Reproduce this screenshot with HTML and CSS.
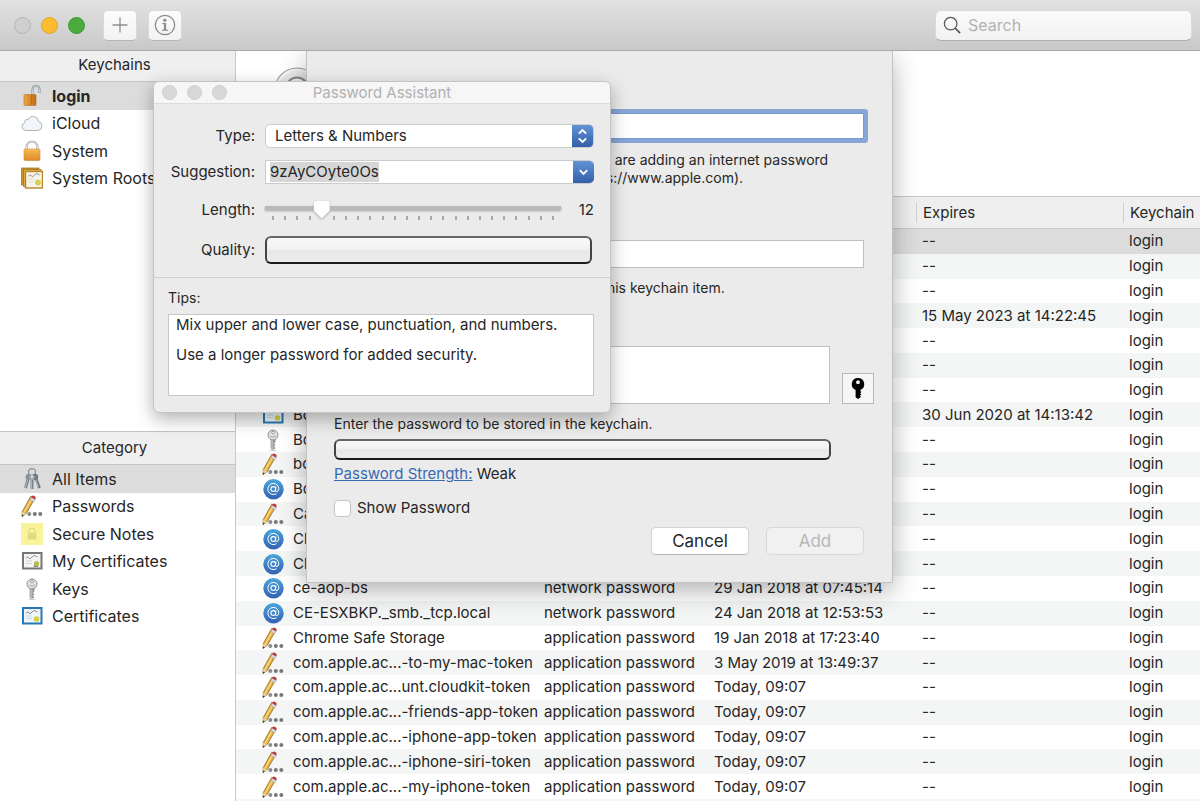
FILE: index.html
```html
<!DOCTYPE html>
<html lang="en">
<head>
    <meta charset="UTF-8">
    <meta name="viewport" content="width=device-width, initial-scale=1.0">
    <title>Keychain Access</title>
    <link rel="stylesheet" href="styles.css">
</head>
<body>
    <!-- Shared icons -->
    <svg class="sprite" aria-hidden="true">
        <defs>
            <linearGradient id="gold" x1="0" y1="0" x2="0" y2="1">
                <stop offset="0" stop-color="#fbc05c"/>
                <stop offset="1" stop-color="#e08a22"/>
            </linearGradient>
            <linearGradient id="copper" x1="0" y1="0" x2="1" y2="0">
                <stop offset="0" stop-color="#f0a640"/>
                <stop offset="1" stop-color="#c06a14"/>
            </linearGradient>
            <linearGradient id="blue" x1="0" y1="0" x2="0" y2="1">
                <stop offset="0" stop-color="#48a6d8"/>
                <stop offset="1" stop-color="#3561b4"/>
            </linearGradient>
            <linearGradient id="steel" x1="0" y1="0" x2="1" y2="0">
                <stop offset="0" stop-color="#d5d5d5"/>
                <stop offset="1" stop-color="#8a8a8a"/>
            </linearGradient>
        </defs>
        <symbol id="lock-open" viewBox="0 0 22 22">
            <path d="M11.500 10V5q0-4 3.500-4t3.500 3.500V8" fill="none" stroke="#7f9099" stroke-width="2"/>
            <path d="M11.500 9V5q0-4 3.500-4t3.500 3.500V7.500" fill="none" stroke="#dfe6ea" stroke-width=".8"/>
            <rect x="3" y="9.500" width="12" height="11" rx="1" fill="url(#copper)" stroke="#b5701f" stroke-width=".6"/>
            <path d="M10.500 10v10" stroke="#a9570c" stroke-width=".8" opacity=".6"/>
        </symbol>
        <symbol id="lock" viewBox="0 0 22 22">
            <path d="M5.500 11V7a5.500 5.500 0 0 1 11 0v4" fill="none" stroke="#9a9a9a" stroke-width="2"/>
            <path d="M5.500 10V7a5.500 5.500 0 0 1 11 0v3" fill="none" stroke="#f0f0f0" stroke-width=".9"/>
            <rect x="3" y="9" width="16" height="11.500" rx="1.200" fill="url(#gold)" stroke="#cf8a30" stroke-width=".6"/>
            <path d="M3.500 12h15M3.500 14.500h15M3.500 17h15" stroke="#d68d33" stroke-width=".6" opacity=".7"/>
        </symbol>
        <symbol id="cloud" viewBox="0 0 22 22">
            <path d="M5 18.500a4 4 0 0 1-1.500-7.700 3.300 3.300 0 0 1 4-3.500 5.300 5.300 0 0 1 10 2.200 4.600 4.600 0 0 1-.4 9z" fill="#f2f5f9" stroke="#a3abb4" stroke-width=".9"/>
        </symbol>
        <symbol id="roots" viewBox="0 0 22 22">
            <rect x=".5" y="1" width="17.500" height="17" fill="#c9922c" stroke="#9a7126" stroke-width=".7"/>
            <rect x="2.500" y="2.500" width="17.500" height="17" fill="#e2b34a" stroke="#9a7126" stroke-width=".7"/>
            <rect x="4.500" y="4.500" width="17" height="16.500" fill="#f7f5ea" stroke="#b98325" stroke-width="1.400"/>
            <path d="M7.500 9q2-2 3 0t3-1 5 0" fill="none" stroke="#777" stroke-width=".8"/>
            <path d="M7.500 12h6M7.500 15h5" stroke="#d5d2c4" stroke-width=".8"/>
            <circle cx="17" cy="15.500" r="3" fill="#d5cf53"/>
        </symbol>
        <symbol id="keyring" viewBox="0 0 22 22">
            <circle cx="11" cy="4" r="3.500" fill="none" stroke="#8c949b" stroke-width="1.300"/>
            <path d="M8 8 4.500 20M11 8v13M14 8l4.500 12" stroke="#6c747b" stroke-width="2.800"/>
            <path d="M7.700 9 4.200 20M10.700 9v12M13.700 9l3.700 10" stroke="#c4cacf" stroke-width=".9"/>
            <circle cx="7.500" cy="9" r="3" fill="#899198"/>
            <circle cx="14" cy="9" r="3.200" fill="#737b82"/>
            <circle cx="11" cy="9.500" r="2.500" fill="#a9b0b6"/>
            <circle cx="11" cy="8.500" r=".9" fill="#f1f1f1"/>
        </symbol>
        <symbol id="pencil" viewBox="0 0 22 22">
            <path d="M9.800 1.300 14 3.200 5.200 18.500 1 21.500l.3-5z" fill="#e9b03c" stroke="#7d5d24" stroke-width=".7"/>
            <path d="M10.700 3.800 3.200 17.200" stroke="#fbe08e" stroke-width="1.200"/>
            <path d="m8.900 4.800 3.900 2.200L14.200 4.400 10.300 2.100z" fill="#d4d6da" stroke="#8f8f8f" stroke-width=".4"/>
            <path d="M10.200 2.300q.8-2.400 3-1.400t1 3.500z" fill="#c5343b"/>
            <path d="m1.300 16.800 3.700 1.700L1 21.300z" fill="#ecd3a3"/>
            <path d="m.8 21.800.3-2.200 1.700.9z" fill="#333"/>
            <circle cx="8.300" cy="19" r="2" fill="#8b8b8b"/>
            <circle cx="13.800" cy="19" r="2" fill="#777"/>
            <circle cx="19.300" cy="19" r="2" fill="#777"/>
        </symbol>
        <symbol id="note" viewBox="0 0 22 22">
            <rect x="0" y="0" width="22" height="22" fill="#f9f39a"/>
            <path d="M8.200 10V8a2.800 2.800 0 0 1 5.600 0v2" fill="none" stroke="#e0d885" stroke-width="1.300"/>
            <rect x="6.700" y="10" width="8.600" height="6.500" fill="#e2d983"/>
        </symbol>
        <symbol id="cert-gray" viewBox="0 0 22 22">
            <rect x="2" y="3" width="18.500" height="15.500" fill="#f4f4f1" stroke="#767676" stroke-width="2"/>
            <path d="M5 8q2-2 3 0t3-1 5.500 0" fill="none" stroke="#777" stroke-width=".8"/>
            <path d="M5 11h6M5 13.500h6" stroke="#ccc" stroke-width=".8"/>
            <path d="m14 12-1.500 5h5z" fill="#82906c"/>
            <circle cx="15.500" cy="13.500" r="2.600" fill="#b7bb52"/>
        </symbol>
        <symbol id="cert" viewBox="0 0 22 22">
            <rect x="2" y="3" width="18.500" height="15.500" fill="#eef6fa" stroke="#2878b5" stroke-width="2"/>
            <path d="M5 8q2-2 3 0t3-1 5.500 0" fill="none" stroke="#667" stroke-width=".8"/>
            <path d="M5 11h6M5 13.500h6" stroke="#b6d5e4" stroke-width=".8"/>
            <circle cx="15.500" cy="14" r="2.800" fill="#d8cf4c"/>
        </symbol>
        <symbol id="key" viewBox="0 0 22 22">
            <path d="M9 10v9.500l1.500 1.300 2.500-1.600-1.300-1.500 1.300-1.500-1.300-1.400 1.300-1.500V10z" fill="url(#steel)" stroke="#777" stroke-width=".6"/>
            <circle cx="11" cy="6" r="5" fill="#e3e3e3" stroke="#888" stroke-width=".9"/>
            <circle cx="11" cy="3.600" r="1.300" fill="#fff" stroke="#777" stroke-width=".7"/>
            <path d="M8 7q3 2.500 6 0" fill="none" stroke="#999" stroke-width=".8"/>
            <ellipse cx="11" cy="21.300" rx="4" ry=".6" fill="#ccc"/>
        </symbol>
        <symbol id="at" viewBox="0 0 22 22">
            <circle cx="11.500" cy="11.300" r="10.200" fill="url(#blue)"/>
            <circle cx="11.300" cy="11" r="2.400" fill="none" stroke="#fff" stroke-width="1.100"/>
            <path d="M14 8.500 13.400 12q0 1.700 1.400 1.600 1.900-.3 2-2.900A5.500 5.500 0 0 0 11.200 5.400a5.600 5.600 0 1 0 3.300 10.300" fill="none" stroke="#fff" stroke-width="1"/>
        </symbol>
    </svg>

    <header class="toolbar">
        <span class="light light-off"></span>
        <span class="light light-yellow"></span>
        <span class="light light-green"></span>
        <button class="tool-btn tool-first" type="button" aria-label="Add">
            <svg viewBox="0 0 24 24"><path d="M12 4.500v15M4.500 12h15" stroke="#8d8d8d" stroke-width="1.300"/></svg>
        </button>
        <button class="tool-btn" type="button" aria-label="Info">
            <svg viewBox="0 0 24 24">
                <circle cx="12" cy="12" r="9.700" fill="none" stroke="#8d8d8d" stroke-width="1.300"/>
                <circle cx="11.800" cy="7.200" r="1.600" fill="#8d8d8d"/>
                <path d="M9.300 10.500h2" stroke="#8d8d8d" stroke-width="1.200"/>
                <path d="M12 10v7" stroke="#8d8d8d" stroke-width="2.200"/>
                <path d="M9 17.200h6.200" stroke="#8d8d8d" stroke-width="1.200"/>
            </svg>
        </button>
        <label class="search">
            <svg viewBox="0 0 20 20"><circle cx="8.500" cy="8.500" r="7" fill="none" stroke="#555" stroke-width="1.400"/><path d="m13.500 13.500 5.500 5.500" stroke="#555" stroke-width="1.800"/></svg>
            <input type="search" placeholder="Search" aria-label="Search">
        </label>
    </header>

    <div class="main">
        <aside class="sidebar">
            <section class="keychains">
                <h2>Keychains</h2>
                <ul class="list">
                    <li class="selected"><svg><use href="#lock-open"/></svg>login</li>
                    <li><svg><use href="#cloud"/></svg>iCloud</li>
                    <li><svg><use href="#lock"/></svg>System</li>
                    <li><svg><use href="#roots"/></svg>System Roots</li>
                </ul>
            </section>
            <section class="category">
                <h2>Category</h2>
                <ul class="list">
                    <li class="selected"><svg><use href="#keyring"/></svg>All Items</li>
                    <li><svg><use href="#pencil"/></svg>Passwords</li>
                    <li><svg><use href="#note"/></svg>Secure Notes</li>
                    <li><svg><use href="#cert-gray"/></svg>My Certificates</li>
                    <li><svg><use href="#key"/></svg>Keys</li>
                    <li><svg><use href="#cert"/></svg>Certificates</li>
                </ul>
            </section>
        </aside>

        <main class="content">
            <div class="detail">
                <svg class="detail-icon" viewBox="0 0 48 48">
                    <circle cx="24" cy="24" r="22" fill="#f6f6f6" stroke="#9c9c9c" stroke-width="1.200"/>
                    <circle cx="24" cy="24" r="19" fill="#ebebeb"/>
                    <circle cx="24" cy="22.500" r="11" fill="#f6f6f6" stroke="#8a8a8a" stroke-width="2"/>
                    <circle cx="24" cy="24" r="5" fill="none" stroke="#8a8a8a" stroke-width="2"/>
                </svg>
            </div>
            <div class="table-wrap">
                <table>
                    <colgroup>
                        <col>
                        <col class="col-kind">
                        <col class="col-modified">
                        <col class="col-expires">
                        <col class="col-keychain">
                    </colgroup>
                    <thead>
                        <tr>
                            <th aria-label="Name"></th>
                            <th aria-label="Kind"></th>
                            <th aria-label="Date Modified"></th>
                            <th><span>Expires</span></th>
                            <th><span>Keychain</span></th>
                        </tr>
                    </thead>
                    <tbody id="items"></tbody>
                </table>
            </div>
        </main>
    </div>

    <!-- New password sheet -->
    <form class="sheet">
        <input class="field focused" type="text" aria-label="Keychain Item Name">
        <p class="hint hint-name">Enter a name for this keychain item. If you are adding an internet password item, enter the full URL (for example: https://www.apple.com).</p>
        <input class="field" type="text" aria-label="Account Name">
        <p class="hint hint-account">Enter the account name associated with this keychain item.</p>
        <div class="password-row">
            <textarea class="field" aria-label="Password"></textarea>
            <button class="key-btn" type="button" aria-label="Password Assistant">
                <svg viewBox="0 0 16 24"><path fill-rule="evenodd" d="M8 1a6.500 6.500 0 0 0-2.500 12.500V21L8 23l3-2.200-1-1.300 1.500-1.300-1.200-1.300 1.200-1.200-1-1V13.500A6.500 6.500 0 0 0 8 1zm0 2.500a2 2 0 1 1 0 4 2 2 0 0 1 0-4z"/></svg>
            </button>
        </div>
        <p class="hint">Enter the password to be stored in the keychain.</p>
        <div class="bar strength-bar" role="meter" aria-label="Password Strength" aria-valuenow="0"></div>
        <p class="strength"><a href="#">Password Strength:</a> Weak</p>
        <label class="show"><input type="checkbox">Show Password</label>
        <div class="actions">
            <button type="button">Cancel</button>
            <button type="button" disabled>Add</button>
        </div>
    </form>

    <!-- Password Assistant window -->
    <section class="assistant">
        <div class="assistant-title">
            <span class="dot"></span><span class="dot"></span><span class="dot"></span>
            <h1>Password Assistant</h1>
        </div>
        <div class="assistant-form">
            <label for="type">Type:</label>
            <div class="popup">
                <select id="type"><option>Letters &amp; Numbers</option></select>
                <svg class="cap" viewBox="0 0 20 24"><path d="m6 9.500 4-4 4 4M6 14.500l4 4 4-4"/></svg>
            </div>
            <label for="suggestion">Suggestion:</label>
            <div class="combo">
                <input id="suggestion" type="text" value="9zAyCOyte0Os">
                <button class="cap" type="button" aria-label="More suggestions"><svg viewBox="0 0 20 24"><path d="m6 10 4 4 4-4"/></svg></button>
            </div>
            <label for="length">Length:</label>
            <div class="length">
                <div class="slider">
                    <input id="length" type="range" min="8" max="31" value="12">
                    <div class="ticks" id="ticks"></div>
                </div>
                <output for="length" id="length-value">12</output>
            </div>
            <span class="label">Quality:</span>
            <div class="bar quality-bar" role="meter" aria-label="Quality" aria-valuenow="0"></div>
        </div>
        <div class="tips">
            <h2>Tips:</h2>
            <div class="tips-box">
                <p>Mix upper and lower case, punctuation, and numbers.</p>
                <p>Use a longer password for added security.</p>
            </div>
        </div>
    </section>

    <script>
        const items = [
            {}, {}, {},
            { expires: "15 May 2023 at 14:22:45" },
            {}, {}, {},
            { icon: "cert", name: "Bo", expires: "30 Jun 2020 at 14:13:42" },
            { icon: "key", name: "Bo" },
            { icon: "pencil", name: "bo" },
            { icon: "at", name: "Bo" },
            { icon: "pencil", name: "Ca" },
            { icon: "at", name: "Ch" },
            { icon: "at", name: "Ch" },
            { icon: "at", name: "ce-aop-bs", kind: "network password", modified: "29 Jan 2018 at 07:45:14" },
            { icon: "at", name: "CE-ESXBKP._smb._tcp.local", kind: "network password", modified: "24 Jan 2018 at 12:53:53" },
            { icon: "pencil", name: "Chrome Safe Storage", kind: "application password", modified: "19 Jan 2018 at 17:23:40" },
            { icon: "pencil", name: "com.apple.ac...-to-my-mac-token", kind: "application password", modified: "3 May 2019 at 13:49:37" },
            { icon: "pencil", name: "com.apple.ac...unt.cloudkit-token", kind: "application password", modified: "Today, 09:07" },
            { icon: "pencil", name: "com.apple.ac...-friends-app-token", kind: "application password", modified: "Today, 09:07" },
            { icon: "pencil", name: "com.apple.ac...-iphone-app-token", kind: "application password", modified: "Today, 09:07" },
            { icon: "pencil", name: "com.apple.ac...-iphone-siri-token", kind: "application password", modified: "Today, 09:07" },
            { icon: "pencil", name: "com.apple.ac...-my-iphone-token", kind: "application password", modified: "Today, 09:07" }
        ];

        const tbody = document.getElementById('items');

        items.forEach((item, index) => {
            const row = document.createElement('tr');
            if (index === 0) {
                row.className = 'selected';
            }
            const icon = item.icon ? `<svg><use href="#${item.icon}"/></svg>` : '';
            row.innerHTML = `
                <td><div class="name">${icon}${item.name || ''}</div></td>
                <td>${item.kind || ''}</td>
                <td>${item.modified || ''}</td>
                <td>${item.expires || '--'}</td>
                <td>login</td>
            `;
            tbody.appendChild(row);
        });

        // One tick for each length
        const slider = document.getElementById('length');
        for (let i = Number(slider.min); i <= Number(slider.max); i++) {
            document.getElementById('ticks').appendChild(document.createElement('i'));
        }
        slider.addEventListener('input', () => {
            document.getElementById('length-value').textContent = slider.value;
        });

        const suggestion = document.getElementById('suggestion');
        suggestion.focus();
        suggestion.select();
    </script>
</body>
</html>
```
FILE: styles.css
```css
* {
    box-sizing: border-box;
}
body {
    margin: 0;
    height: 100vh;
    display: flex;
    flex-direction: column;
    overflow: hidden;
    position: relative;
    background-color: #fff;
    color: #262626;
    font-family: Inter, "Liberation Sans", sans-serif;
    font-size: 15px;
    line-height: 20px;
}
h1, h2, p, ul {
    margin: 0;
    padding: 0;
    font-size: inherit;
    font-weight: normal;
}
button, input, select, textarea {
    font: inherit;
    color: inherit;
}
.sprite {
    position: absolute;
    width: 0;
    height: 0;
}

/* Toolbar */
.toolbar {
    position: relative;
    z-index: 2;
    flex: none;
    height: 51px;
    padding: 0 8px 0 14px;
    display: flex;
    align-items: center;
    gap: 10px;
    background: linear-gradient(#e2e2e2, #c9c9c9);
    border-bottom: 1px solid #aaa;
}
.light {
    width: 17px;
    height: 17px;
    border-radius: 50%;
    border: 1px solid;
}
.light-off {
    background-color: #cfcfcf;
    border-color: #b5b5b5;
}
.light-yellow {
    background-color: #fcbc2f;
    border-color: #e3a325;
}
.light-green {
    background-color: #48ab3b;
    border-color: #3d9933;
}
.tool-btn {
    width: 34px;
    height: 31px;
    padding: 0;
    display: flex;
    align-items: center;
    justify-content: center;
    border: 1px solid #dadada;
    border-bottom-color: #b5b5b5;
    border-radius: 5px;
    background: linear-gradient(#fcfcfc, #f2f2f2);
    margin-right: 1px;
}
.tool-first {
    margin-left: 8px;
}
.tool-btn svg {
    width: 24px;
    height: 24px;
}
.search {
    width: 257px;
    height: 31px;
    margin-left: auto;
    padding: 0 7px;
    display: flex;
    align-items: center;
    gap: 7px;
    border: 1px solid #dadada;
    border-bottom-color: #b0b0b0;
    border-radius: 6px;
    background: linear-gradient(#fafafa, #f2f2f2);
}
.search svg {
    width: 18px;
    height: 18px;
    flex: none;
}
.search input {
    flex: 1;
    min-width: 0;
    padding: 0;
    border: 0;
    outline: 0;
    background: none;
    font-size: 16px;
}
.search input::placeholder {
    color: #b2b2b2;
}

/* Sidebar */
.main {
    flex: 1;
    min-height: 0;
    display: flex;
}
.sidebar {
    flex: 0 0 236px;
    display: flex;
    flex-direction: column;
    border-right: 1px solid #c8c8c8;
}
.keychains {
    flex: 0 0 380px;
}
.sidebar h2 {
    height: 31px;
    padding-right: 6px;
    line-height: 28px;
    text-align: center;
    background-color: #efeff0;
    border-bottom: 1px solid #c3c3c3;
}
.category h2 {
    height: 34px;
    line-height: 32px;
    border-top: 1px solid #c3c3c3;
}
.list {
    height: 110px;
    display: grid;
    grid-auto-rows: 1fr;
    list-style: none;
    font-size: 16px;
}
.category .list {
    height: 165px;
}
.list li {
    padding-left: 21px;
    display: flex;
    align-items: center;
    gap: 9px;
}
.list svg {
    width: 22px;
    height: 22px;
}
.list .selected {
    background-color: #dcdcdc;
}
.keychains .selected {
    font-weight: bold;
}

/* Item table */
.content {
    flex: 1;
    min-width: 0;
    display: flex;
    flex-direction: column;
}
.detail {
    flex: 0 0 145px;
    padding: 15px 37px;
}
.detail-icon {
    width: 48px;
    height: 48px;
}
.table-wrap {
    flex: 1;
    min-height: 0;
    padding-bottom: 2px;
    background-color: #f4f5f5;
}
table {
    width: 100%;
    height: 100%;
    table-layout: fixed;
    border-spacing: 0;
    background-color: #fff;
}
.col-kind {
    width: 170px;
}
.col-modified {
    width: 208px;
}
.col-expires {
    width: 207px;
}
.col-keychain {
    width: 79px;
}
th {
    height: 33px;
    padding: 0;
    font-weight: normal;
    text-align: left;
    background-color: #efefef;
    border-top: 1px solid #c6c6c6;
    border-bottom: 1px solid #c6c6c6;
}
th span {
    display: block;
    padding-left: 6px;
    margin-left: 2px;
    border-left: 1px solid #cfcfcf;
    white-space: nowrap;
}
td {
    padding: 0 0 0 8px;
    white-space: nowrap;
}
td:first-child {
    padding-left: 26px;
}
tbody tr:nth-child(even) {
    background-color: #f4f5f5;
}
tbody .selected {
    background-color: #dcdcdc;
}
.name {
    height: 22px;
    display: flex;
    align-items: center;
    gap: 9px;
}
.name svg {
    width: 22px;
    height: 22px;
    flex: none;
}

/* Sheet */
.sheet {
    position: absolute;
    z-index: 1;
    top: 51px;
    left: 306px;
    width: 587px;
    padding: 62px 28px 27px 27px;
    background-color: #ebebeb;
    border: 1px solid #c2c2c2;
    border-top: 0;
    box-shadow: 0 8px 24px rgba(0, 0, 0, 0.3);
    font-size: 14px;
    line-height: 18px;
}
.field {
    display: block;
    width: 100%;
    height: 28px;
    padding: 4px;
    border: 1px solid #c0c0c0;
    border-radius: 0;
    outline: 0;
    resize: none;
    background-color: #fff;
}
.focused {
    height: 26px;
    border-color: #7699cf;
    box-shadow: 0 0 0 4px #86a6d6;
    border-radius: 1px;
}
.hint {
    margin-top: 11px;
}
.hint-name {
    margin-top: 12px;
    margin-bottom: 53px;
}
.hint-account {
    margin-bottom: 49px;
}
.password-row {
    display: flex;
    align-items: flex-end;
    gap: 12px;
}
.password-row .field {
    flex: 1;
    height: 58px;
}
.key-btn {
    width: 32px;
    height: 31px;
    margin-right: -10px;
    padding: 0;
    display: flex;
    align-items: center;
    justify-content: center;
    border: 1px solid #b9b9b9;
    background-color: #f6f6f6;
    color: #000;
}
.key-btn svg {
    width: 16px;
    height: 23px;
}
.bar {
    border: 2px solid #1a1a1a;
    border-top-color: #666;
    border-left-color: #444;
    border-right-color: #444;
    border-radius: 6px;
    background: linear-gradient(#f8f8f8, #f1f1f1 50%, #e8e8e8 50%, #ececec);
}
.strength-bar {
    height: 21px;
    margin: 6px 33px 0 0;
}
.strength {
    margin-top: 4px;
    font-size: 15px;
    line-height: 20px;
}
.strength a {
    color: #3869b1;
}
.show {
    margin-top: 14px;
    display: flex;
    align-items: center;
    gap: 6px;
    font-size: 15px;
    line-height: 20px;
}
.show input {
    appearance: none;
    width: 17px;
    height: 17px;
    margin: 0;
    border: 1px solid #c4c4c4;
    border-radius: 4px;
    background-color: #fff;
}
.actions {
    margin-top: 9px;
    display: flex;
    justify-content: flex-end;
    gap: 17px;
}
.actions button {
    width: 98px;
    height: 28px;
    padding: 0;
    border: 1px solid #d2d2d2;
    border-bottom-color: #b4b4b4;
    border-radius: 5px;
    background-color: #fff;
    font-size: 17px;
}
.actions button:disabled {
    color: #b7b7b7;
    background-color: #f1f1f1;
    border-color: #d8d8d8;
}

/* Password Assistant */
.assistant {
    position: absolute;
    z-index: 3;
    top: 81px;
    left: 153px;
    width: 458px;
    border: 1px solid #c4c4c4;
    border-radius: 6px;
    overflow: hidden;
    background-color: #ebebeb;
    box-shadow: 0 6px 18px rgba(0, 0, 0, 0.3);
}
.assistant-title {
    height: 22px;
    padding: 0 8px;
    display: flex;
    align-items: center;
    gap: 10px;
    background-color: #f6f6f6;
    border-bottom: 1px solid #dcdcdc;
}
.assistant-title h1 {
    flex: 1;
    padding-right: 75px;
    text-align: center;
    color: #b0b0b0;
}
.dot {
    width: 15px;
    height: 15px;
    border-radius: 50%;
    border: 1px solid #cdcdcd;
    background-color: #d8d8d8;
}
.assistant-form {
    padding: 20px 16px 13px 8px;
    display: grid;
    grid-template-columns: 93px 1fr;
    grid-template-rows: 24px 24px 28px 28px;
    gap: 12px 10px;
    align-items: center;
    border-bottom: 1px solid #cfcfcf;
}
.assistant-form > label, .label {
    text-align: right;
}
.popup, .combo {
    height: 24px;
    display: flex;
    background-color: #fff;
    border: 1px solid #cbcbcb;
}
.popup {
    position: relative;
    border-radius: 5px;
    overflow: hidden;
}
.popup select {
    appearance: none;
    flex: 1;
    padding: 0 28px 0 9px;
    border: 0;
    background: none;
}
.cap {
    width: 21px;
    padding: 0;
    border: 0;
    background: linear-gradient(#6293d6, #345fa9);
    fill: none;
    stroke: #fff;
    stroke-width: 2;
}
.popup .cap {
    position: absolute;
    top: 0;
    right: 0;
    height: 100%;
    pointer-events: none;
}
.combo {
    border-right: 0;
    border-radius: 0 5px 5px 0;
    overflow: hidden;
}
.combo input {
    flex: 1;
    min-width: 0;
    padding: 0 4px;
    border: 0;
    outline: 0;
    background: none;
}
.combo input::selection {
    background-color: #d6d6d6;
    color: #262626;
}
.cap svg {
    display: block;
    width: 21px;
    height: 22px;
}
.length {
    display: flex;
    align-items: center;
    justify-content: space-between;
}
.slider {
    width: 296px;
    height: 20px;
    position: relative;
}
.slider input {
    appearance: none;
    display: block;
    width: 100%;
    height: 19px;
    margin: 0;
    outline: 0;
    background: linear-gradient(#b9b9b9, #b9b9b9) 0 6px / 100% 4px no-repeat;
    filter: drop-shadow(0 1px 1px rgba(0, 0, 0, 0.3));
}
.slider input::-webkit-slider-thumb {
    appearance: none;
    width: 16px;
    height: 18px;
    border-radius: 3px 3px 0 0;
    background-color: #fff;
    clip-path: polygon(0 0, 100% 0, 100% 55%, 50% 100%, 0 55%);
}
.ticks {
    position: absolute;
    left: 7px;
    right: 7px;
    bottom: 0;
    display: flex;
    justify-content: space-between;
    pointer-events: none;
}
.ticks i {
    width: 2px;
    height: 4px;
    background-color: #a9a9a9;
}
.ticks i:nth-child(5) {
    visibility: hidden;
}
.quality-bar {
    height: 28px;
    margin-right: 2px;
}
.tips {
    padding: 10px 16px 16px 14px;
}
.tips h2 {
    font-size: 14px;
}
.tips-box {
    height: 82px;
    margin-top: 6px;
    padding: 0 7px;
    background-color: #fff;
    border: 1px solid #c6c6c6;
}
.tips-box p + p {
    margin-top: 10px;
}
```
